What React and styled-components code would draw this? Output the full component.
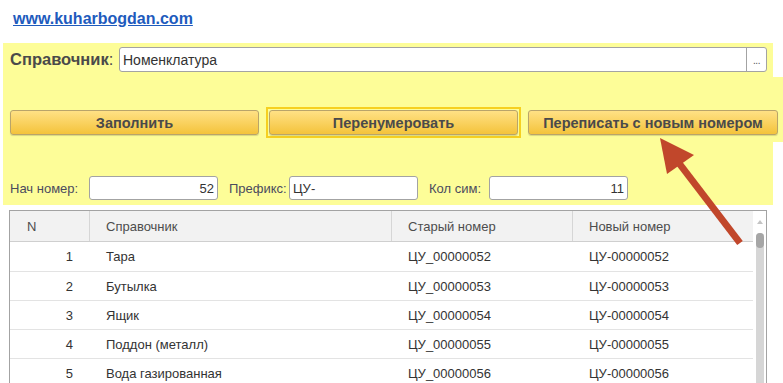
import React from 'react';
import styled, { createGlobalStyle } from 'styled-components';

const GlobalStyle = createGlobalStyle`
  html, body {
    margin: 0;
    padding: 0;
    background: #fff;
    overflow: hidden;
  }
  body {
    font-family: Arial, "Liberation Sans", sans-serif;
    color: #333;
  }
`;

const rows = [
  { n: 1, name: 'Тара', oldNum: 'ЦУ_00000052', newNum: 'ЦУ-00000052' },
  { n: 2, name: 'Бутылка', oldNum: 'ЦУ_00000053', newNum: 'ЦУ-00000053' },
  { n: 3, name: 'Ящик', oldNum: 'ЦУ_00000054', newNum: 'ЦУ-00000054' },
  { n: 4, name: 'Поддон (металл)', oldNum: 'ЦУ_00000055', newNum: 'ЦУ-00000055' },
  { n: 5, name: 'Вода газированная', oldNum: 'ЦУ_00000056', newNum: 'ЦУ-00000056' },
];

const App = () => (
  <Page>
    <GlobalStyle />
    <SiteLink href="#">www.kuharbogdan.com</SiteLink>

    <Panel>
      <CatalogRow>
        <CatalogLabel>
          Справочник<Colon>:</Colon>
        </CatalogLabel>
        <Field $grow>
          <FieldText $big>Номенклатура</FieldText>
          <ChooseButton>...</ChooseButton>
        </Field>
      </CatalogRow>

      <ActionBand>
        <ButtonFrame>
          <ActionButton>Заполнить</ActionButton>
        </ButtonFrame>
        <ButtonFrame $focused>
          <ActionButton>Перенумеровать</ActionButton>
        </ButtonFrame>
        <ButtonFrame>
          <ActionButton $wide>Переписать с новым номером</ActionButton>
        </ButtonFrame>
      </ActionBand>

      <ParamsRow>
        <ParamLabel $width={79}>Нач номер:</ParamLabel>
        <Field $width={129}>
          <FieldText $right>52</FieldText>
        </Field>
        <ParamLabel $width={60} $gap={11}>Префикс:</ParamLabel>
        <Field $width={129}>
          <FieldText>ЦУ-</FieldText>
        </Field>
        <ParamLabel $width={60} $gap={11}>Кол сим:</ParamLabel>
        <Field $width={139}>
          <FieldText $right>11</FieldText>
        </Field>
      </ParamsRow>
    </Panel>

    <TableBox>
      <Grid>
        <HeadRow>
          <HeadCell>N</HeadCell>
          <HeadCell $sep>Справочник</HeadCell>
          <HeadCell $sep>Старый номер</HeadCell>
          <HeadCell $sep>Новый номер</HeadCell>
        </HeadRow>
        {rows.map((r) => (
          <BodyRow key={r.n}>
            <Cell $right>{r.n}</Cell>
            <Cell>{r.name}</Cell>
            <Cell>{r.oldNum}</Cell>
            <Cell>{r.newNum}</Cell>
          </BodyRow>
        ))}
      </Grid>
      <Scrollbar>
        <ScrollArrow />
        <Track>
          <Thumb />
        </Track>
      </Scrollbar>
    </TableBox>

    <Pointer viewBox="0 0 783 383" width="783" height="383">
      <line x1="740" y1="243" x2="672" y2="154" stroke="#c1472b" strokeWidth="7" />
      <polygon points="660,138 694,155 667,174" fill="#c1472b" />
    </Pointer>
  </Page>
);

const Page = styled.div`
  position: relative;
  width: 783px;
  height: 383px;
  overflow: hidden;
`;

const SiteLink = styled.a`
  display: inline-block;
  margin: 9px 0 0 13px;
  font-size: 16px;
  font-weight: bold;
  color: #1e5bbd;
  text-decoration: underline;
  line-height: 19px;
`;

const Panel = styled.div`
  margin: 15px 0 0 3px;
  width: 770px;
  height: 162px;
  background: #fdfd98;
  display: flex;
  flex-direction: column;
  padding: 4px 0 0 7px;
  box-sizing: border-box;
`;

const CatalogRow = styled.div`
  display: flex;
  align-items: center;
  height: 25px;
  padding-right: 6px;
`;

const CatalogLabel = styled.span`
  width: 109px;
  flex: none;
  font-size: 16.5px;
  font-weight: bold;
  color: #4a4a4a;
  white-space: nowrap;
`;

const Colon = styled.span`
  font-weight: normal;
`;

const Field = styled.div`
  display: flex;
  align-items: center;
  height: ${(p) => (p.$grow ? 25 : 24)}px;
  width: ${(p) => (p.$width ? `${p.$width}px` : 'auto')};
  flex: ${(p) => (p.$grow ? 1 : 'none')};
  box-sizing: border-box;
  border: 1px solid #a3a3a3;
  border-radius: 3px;
  background: #fff;
  overflow: hidden;
`;

const FieldText = styled.span`
  flex: 1;
  padding: 0 3px;
  font-size: ${(p) => (p.$big ? 14 : 13)}px;
  color: #333;
  text-align: ${(p) => (p.$right ? 'right' : 'left')};
`;

const ChooseButton = styled.span`
  width: 20px;
  height: 100%;
  border-left: 1px solid #a3a3a3;
  display: flex;
  align-items: flex-end;
  justify-content: center;
  padding-bottom: 5px;
  box-sizing: border-box;
  font-size: 10px;
  color: #555;
  letter-spacing: -0.5px;
`;

const ActionBand = styled.div`
  display: flex;
  gap: 4px;
  align-items: flex-start;
  margin: 5px 0 0 -7px;
  width: 780px;
  height: 65px;
  padding: 30px 0 0 4px;
  box-sizing: border-box;
  background: #fdfd98;
`;

const ButtonFrame = styled.div`
  display: flex;
  border: ${(p) => (p.$focused ? '2px solid #f6d020' : '1px solid transparent')};
  padding: ${(p) => (p.$focused ? '1px' : '2px')};
`;

const ActionButton = styled.button`
  width: ${(p) => (p.$wide ? 250 : 249)}px;
  height: 25px;
  border: 1px solid #b9a46a;
  border-radius: 3px;
  background: linear-gradient(#ffe185, #f4c33b);
  box-shadow: 0 1px 1px rgba(0, 0, 0, 0.15);
  font-family: Arial, "Liberation Sans", sans-serif;
  font-size: 14.5px;
  font-weight: bold;
  color: #4a4a4a;
  padding: 0;
  white-space: nowrap;
  cursor: pointer;
`;

const ParamsRow = styled.div`
  display: flex;
  align-items: center;
  margin-top: 34px;
  height: 24px;
`;

const ParamLabel = styled.span`
  width: ${(p) => p.$width}px;
  margin-left: ${(p) => p.$gap || 0}px;
  flex: none;
  font-size: 13px;
  color: #4b4b5e;
  white-space: nowrap;
`;

const TableBox = styled.div`
  margin: 5px 0 0 9px;
  width: 758px;
  height: 190px;
  border: 1px solid #a3a3a3;
  box-sizing: border-box;
  display: flex;
  background: #fff;
`;

const Grid = styled.div`
  width: 743px;
  flex: none;
`;

const columns = '79px 302px 181px 181px';

const HeadRow = styled.div`
  display: grid;
  grid-template-columns: ${columns};
  height: 31px;
  background: #f2f2f2;
  border-bottom: 1px solid #cfcfcf;
  box-sizing: border-box;
`;

const HeadCell = styled.div`
  display: flex;
  align-items: center;
  padding-left: ${(p) => (p.$sep ? 16 : 17)}px;
  border-left: ${(p) => (p.$sep ? '1px solid #d6d6d6' : 'none')};
  font-size: 13px;
  color: #4d4d4d;
`;

const BodyRow = styled.div`
  display: grid;
  grid-template-columns: ${columns};
  height: 29px;
  border-bottom: 1px solid #e3e3e3;
  box-sizing: border-box;
  &:nth-child(2) {
    height: 30px;
  }
`;

const Cell = styled.div`
  display: flex;
  align-items: center;
  justify-content: ${(p) => (p.$right ? 'flex-end' : 'flex-start')};
  padding: ${(p) => (p.$right ? '0 16px 0 0' : '0 0 0 17px')};
  font-size: 13px;
  color: #333;
`;

const Scrollbar = styled.div`
  flex: 1;
  display: flex;
  flex-direction: column;
  align-items: center;
  padding-top: 9px;
`;

const ScrollArrow = styled.div`
  width: 0;
  height: 0;
  border-left: 3px solid transparent;
  border-right: 3px solid transparent;
  border-bottom: 4px solid #c4c4c4;
`;

const Track = styled.div`
  margin-top: 9px;
  width: 8px;
  flex: 1;
  background: #d6d6d6;
  border-radius: 4px 4px 0 0;
`;

const Thumb = styled.div`
  width: 8px;
  height: 15px;
  border-radius: 4px;
  background: #a6a6a6;
`;

const Pointer = styled.svg`
  position: absolute;
  left: 0;
  top: 0;
  pointer-events: none;
`;

export default App;
